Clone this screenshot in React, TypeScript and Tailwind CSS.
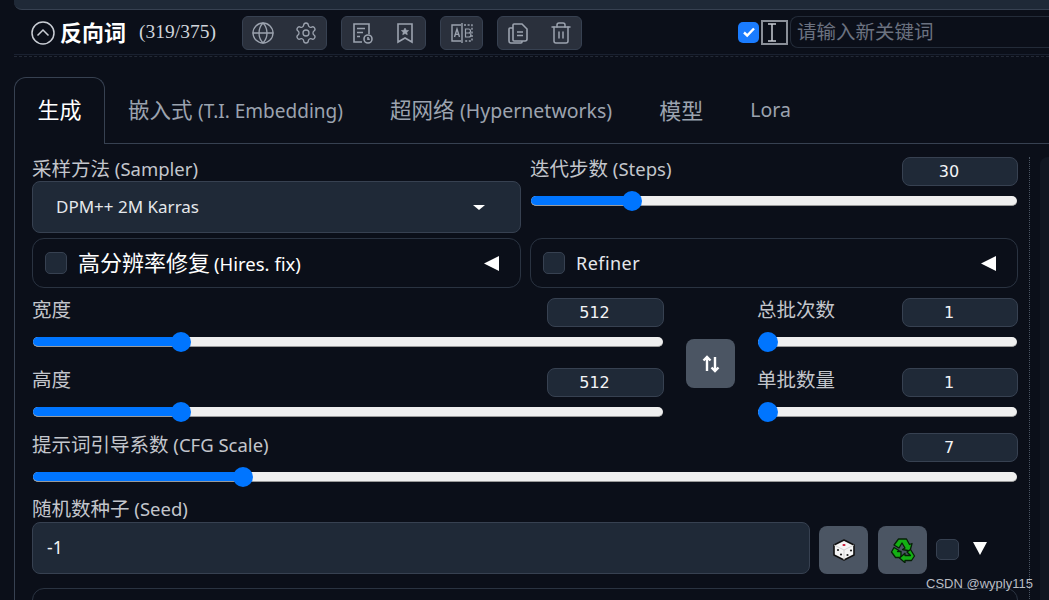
import React from "react";
import { Globe, Settings, Trash2 } from "lucide-react";

const stack = { fontFamily: '"Noto Sans", "Noto Sans CJK SC", sans-serif' };

function IconGroup({ children, width }: { children: React.ReactNode; width: string }) {
    return (
        <div className={`flex h-[34px] items-center justify-between rounded-md border border-[#374151] bg-[#2a303c] px-[8px] text-[#9ca3af] ${width}`}>
            {children}
        </div>
    );
}

function Slider({ percent }: { percent: number }) {
    return (
        <div className="relative h-5 w-full">
            <div className="absolute left-px right-px top-[5px] h-2.5 overflow-hidden rounded-full border-b border-[#9a9a9a] bg-[#efefef]">
                <div className="h-full bg-[#0075ff]" style={{ width: `${percent}%` }} />
            </div>
            <div
                className="absolute top-0 h-5 w-5 rounded-full bg-[#0075ff]"
                style={{ left: `calc(${percent}% - ${percent / 5}px + 1px)` }}
            />
        </div>
    );
}

function NumberBox({ value, width }: { value: string; width: string }) {
    return (
        <div
            className={`flex h-[29px] items-center justify-center rounded-lg border border-[#374151] bg-[#1f2937] pr-[22px] pt-px text-[16px] text-[#f3f4f6] ${width}`}
            style={{ fontFamily: '"DejaVu Sans", sans-serif' }}
        >
            {value}
        </div>
    );
}

function Label({ cjk, latin }: { cjk: string; latin?: string }) {
    return (
        <span className="text-[19.5px] leading-[23px] text-[#c3c6cc]">
            {cjk}
            {latin && <span className="text-[18.5px]"> {latin}</span>}
        </span>
    );
}

function SliderField({ cjk, latin, value, percent, boxWidth }: { cjk: string; latin?: string; value: string; percent: number; boxWidth: string }) {
    return (
        <div>
            <div className="flex h-[29px] items-start justify-between">
                <Label cjk={cjk} latin={latin} />
                <NumberBox value={value} width={boxWidth} />
            </div>
            <div className="mt-[5px]">
                <Slider percent={percent} />
            </div>
        </div>
    );
}

function Caret() {
    return (
        <svg width="17" height="17" viewBox="0 0 17 17" className="fill-white">
            <polygon points="1,8.500 16,1 16,16" />
        </svg>
    );
}

function Accordion({ children, width }: { children: React.ReactNode; width: string }) {
    return (
        <div className={`flex h-[50px] items-center justify-between rounded-xl border border-[#2a3341] pl-3 pr-[20px] ${width}`}>
            <div className="flex items-center gap-[11px]">
                <span className="h-[22px] w-[22px] rounded-[5px] border border-[#374151] bg-[#1f2937]" />
                {children}
            </div>
            <Caret />
        </div>
    );
}

function DocClockIcon() {
    return (
        <svg width="24" height="24" viewBox="0 0 24 24" fill="none" stroke="currentColor" strokeWidth="1.6">
            <path d="M12 21H4V3h15v10" />
            <path d="M7 7.500h8M7 11.500h6M7 15.500h3" />
            <circle cx="18" cy="18" r="4" />
            <path d="M18 16v2.200h1.800" />
        </svg>
    );
}

function BookmarkStarIcon() {
    return (
        <svg width="24" height="24" viewBox="0 0 24 24" fill="none" stroke="currentColor" strokeWidth="1.6">
            <path d="M5 3h14v18l-7-4-7 4z" />
            <path d="M12 7l1.200 2.300 2.400.3-1.800 1.700.5 2.400-2.300-1.200-2.300 1.200.5-2.400-1.800-1.700 2.400-.3z" fill="currentColor" strokeWidth="0.6" />
        </svg>
    );
}

function ABIcon() {
    return (
        <svg width="24" height="24" viewBox="0 0 24 24" fill="none" stroke="currentColor" strokeWidth="1.4">
            <path d="M11 4H2v16h9M12 2v20" />
            <path d="M14 4h8v16h-8" strokeDasharray="2 1.600" />
            <path d="M4.500 16l2.500-8 2.500 8M5.400 13.400h3.200" />
            <path d="M15.500 8h3a2 2 0 010 4h-3zM15.500 12h3.400a2 2 0 010 4h-3.400z" strokeWidth="1.2" />
        </svg>
    );
}

function CopyDocIcon() {
    return (
        <svg width="24" height="24" viewBox="0 0 24 24" fill="none" stroke="currentColor" strokeWidth="1.6">
            <path d="M8 3h8l5 5v10a2 2 0 01-2 2H8a1 1 0 01-1-1V4a1 1 0 011-1z" />
            <path d="M7 7H4a1 1 0 00-1 1v12a2 2 0 002 2h10a1 1 0 001-1v-1" />
            <path d="M11 11h6M11 14.500h6" />
        </svg>
    );
}

function DiceIcon() {
    return (
        <svg width="24" height="24" viewBox="0 0 24 24">
            <polygon points="12,2 22,7 22,17 12,22 2,17 2,7" fill="#f5f5f5" stroke="#111" strokeWidth="1.6" strokeLinejoin="round" />
            <path d="M2 7l10 5 10-5M12 12v10" fill="none" stroke="#c9c9c9" strokeWidth="0.8" />
            <ellipse cx="12" cy="7" rx="1.600" ry="1.100" fill="#c8102e" />
            <circle cx="6" cy="12" r="1.100" fill="#222" />
            <circle cx="9" cy="16.500" r="1.100" fill="#222" />
            <circle cx="15.500" cy="17" r="1.100" fill="#222" />
            <circle cx="19" cy="12.500" r="1.100" fill="#222" />
        </svg>
    );
}

function RecycleIcon() {
    return (
        <svg width="26" height="26" viewBox="0 0 26 26" fill="#14b014" stroke="#062006" strokeWidth="1.300" strokeLinejoin="round">
            <path d="M8.500 2h8l3 5.500 2.500-1-2 7.500-7.500-1.500 2.500-1.500-3-5-3 5-5-3z" />
            <path d="M4 10.500l5 3-1.500 1 3.500 0v6H5.500L1.500 15z" />
            <path d="M20.500 12.500l4 6.500-3 4.500H15v2.200l-5.500-4.700 5.500-4.700V18.500h5.500l-3.500-3.500z" />
        </svg>
    );
}

export default function App() {
    return (
        <div className="relative h-[600px] w-[1049px] overflow-hidden bg-[#0b0f19] pl-[14px]" style={stack}>
            <div className="h-[10px] rounded-bl-lg border-b border-[#374151] bg-[#1f2937]" />

            <div className="flex h-[45px] items-center border-b border-[#1a2130] pl-[17px]">
                <svg width="24" height="24" viewBox="0 0 24 24" fill="none" stroke="#c9cdd4" strokeWidth="1.5" className="mt-px">
                    <circle cx="12" cy="12" r="11" />
                    <path d="M6.500 14.500L12 9l5.500 5.500" />
                </svg>
                <span className="ml-[5px] text-[22px] font-bold text-white">反向词</span>
                <span className="ml-[13px] w-[103px] text-[#d1d5db]" style={{ fontFamily: '"Liberation Serif", serif', fontSize: 19.5 }}>(319/375)</span>
                <div className="mt-[2px] flex gap-[14px]">
                    <IconGroup width="w-[85px]">
                        <Globe size={24} strokeWidth={1.3} />
                        <Settings size={24} strokeWidth={1.3} />
                    </IconGroup>
                    <IconGroup width="w-[85px]">
                        <DocClockIcon />
                        <BookmarkStarIcon />
                    </IconGroup>
                    <div className="flex h-[34px] w-[43px] items-center justify-center rounded-md border border-[#374151] bg-[#2a303c] text-[#9ca3af]">
                        <ABIcon />
                    </div>
                    <IconGroup width="w-[85px]">
                        <CopyDocIcon />
                        <Trash2 size={24} strokeWidth={1.5} />
                    </IconGroup>
                </div>
                <span className="ml-[156px] flex h-[21px] w-[21px] items-center justify-center rounded-[5px] bg-[#1a7cff]">
                    <svg width="14" height="14" viewBox="0 0 14 14" fill="none" stroke="white" strokeWidth="2.400">
                        <path d="M2 7.500l3.200 3L12 3.500" />
                    </svg>
                </span>
                <span className="ml-[2px] flex h-[25px] w-[27px] items-center border-2 border-[#8a8f98] pl-[3px]">
                    <svg width="12" height="21" viewBox="0 0 12 21" fill="none" stroke="#c9cdd4" strokeWidth="1.500">
                        <path d="M2 2h8M2 19h8M6 2v17" />
                    </svg>
                </span>
                <div className="ml-[2px] flex h-[32px] flex-1 items-center rounded-l-lg border-y border-l border-[#232b38] pl-[6px] text-[19.5px] text-[#6b7280]">
                    请输入新关键词
                </div>
            </div>
            <div className="mt-px h-px border-b border-dashed border-[#232936]" />

            <div className="mt-[20px] flex h-[67px]">
                <div className="flex w-[91px] items-center justify-center rounded-t-xl border-x border-t border-[#374151] pb-[4px] text-[22px] text-white">
                    生成
                </div>
                <div className="flex flex-1 items-center gap-[47px] border-b border-[#374151] pl-[23px] text-[21.5px] text-[#9ca3af]">
                    <span>嵌入式 <span className="text-[19px]">(T.I. Embedding)</span></span>
                    <span>超网络 <span className="text-[19.500px]">(Hypernetworks)</span></span>
                    <span className="text-[22px]">模型</span>
                    <span className="text-[19.500px]">Lora</span>
                </div>
            </div>

            <div className="flex h-[460px] border-l border-[#374151] pl-[17px] pt-[13px]">
                <div className="w-[986px] shrink-0">
                    <div className="flex gap-[9px]">
                        <div className="w-[489px]">
                            <div className="h-6"><Label cjk="采样方法" latin="(Sampler)" /></div>
                            <div className="flex h-[52px] items-center justify-between rounded-lg border border-[#374151] bg-[#1f2937] pl-[23px] pr-[35px] text-[17px] text-[#e5e7eb]">
                                DPM++ 2M Karras
                                <span className="h-0 w-0 border-x-[6px] border-t-[5px] border-x-transparent border-t-white" />
                            </div>
                        </div>
                        <div className="w-[488px]">
                            <SliderField cjk="迭代步数" latin="(Steps)" value="30" percent={19.5} boxWidth="w-[116px]" />
                        </div>
                    </div>

                    <div className="mt-[5px] flex gap-[9px]">
                        <Accordion width="w-[489px]">
                            <span className="pb-[2px] text-[22px] text-white">高分辨率修复<span className="ml-[4px] text-[18.500px]">(Hires. fix)</span></span>
                        </Accordion>
                        <Accordion width="w-[488px]">
                            <span className="text-[18px] tracking-wide text-[#e5e7eb]">Refiner</span>
                        </Accordion>
                    </div>

                    <div className="mt-[10px] flex">
                        <div className="flex w-[632px] flex-col gap-4">
                            <SliderField cjk="宽度" value="512" percent={22.6} boxWidth="w-[117px]" />
                            <SliderField cjk="高度" value="512" percent={22.6} boxWidth="w-[117px]" />
                        </div>
                        <button
                            type="button"
                            className="mx-[22px] mt-[41px] flex h-[49px] w-[49px] items-center justify-center self-start rounded-lg bg-[#4b5563]"
                        >
                            <svg width="20" height="20" viewBox="0 0 20 20" fill="none" stroke="white" strokeWidth="2.400">
                                <path d="M6 17V3M2.500 6.500L6 3l3.500 3.500M14 3v14M10.500 13.500L14 17l3.500-3.500" />
                            </svg>
                        </button>
                        <div className="flex w-[261px] flex-col gap-4">
                            <SliderField cjk="总批次数" value="1" percent={0} boxWidth="w-[116px]" />
                            <SliderField cjk="单批数量" value="1" percent={0} boxWidth="w-[116px]" />
                        </div>
                    </div>

                    <div className="mt-[11px]">
                        <SliderField cjk="提示词引导系数" latin="(CFG Scale)" value="7" percent={20.7} boxWidth="w-[116px]" />
                    </div>

                    <div className="mt-[10px] h-6"><Label cjk="随机数种子" latin="(Seed)" /></div>
                    <div className="mt-px flex items-end">
                        <div className="flex h-[52px] w-[778px] items-center rounded-lg border border-[#374151] bg-[#1f2937] pb-[2px] pl-[14px] text-[17.500px] text-[#f3f4f6]">
                            -1
                        </div>
                        <button type="button" className="ml-[9px] flex h-[48px] w-[49px] items-center justify-center rounded-lg bg-[#4b5563]">
                            <DiceIcon />
                        </button>
                        <button type="button" className="ml-[10px] flex h-[48px] w-[49px] items-center justify-center rounded-lg bg-[#4b5563]">
                            <RecycleIcon />
                        </button>
                        <span className="mb-[14px] ml-[9px] h-[21px] w-[23px] rounded-[5px] border border-[#374151] bg-[#1f2937]" />
                        <svg width="16" height="14" viewBox="0 0 16 14" className="mb-[19px] ml-[13px] fill-white">
                            <polygon points="1,1 15,1 8,14" />
                        </svg>
                    </div>
                    <div className="mt-[14px] h-[60px] rounded-xl border border-[#2a3341]" />
                </div>
                <div className="ml-[11px] h-[460px] border-l border-dotted border-[#4b5563]" />
                <div className="ml-[10px] flex-1 rounded-tl-lg bg-[#111722]" />
            </div>

            <span className="absolute left-[926px] top-[574px] text-[13px] text-[#b9bdc4]" style={{ fontFamily: '"Liberation Sans", sans-serif' }}>
                CSDN @wyply115
            </span>
        </div>
    );
}
